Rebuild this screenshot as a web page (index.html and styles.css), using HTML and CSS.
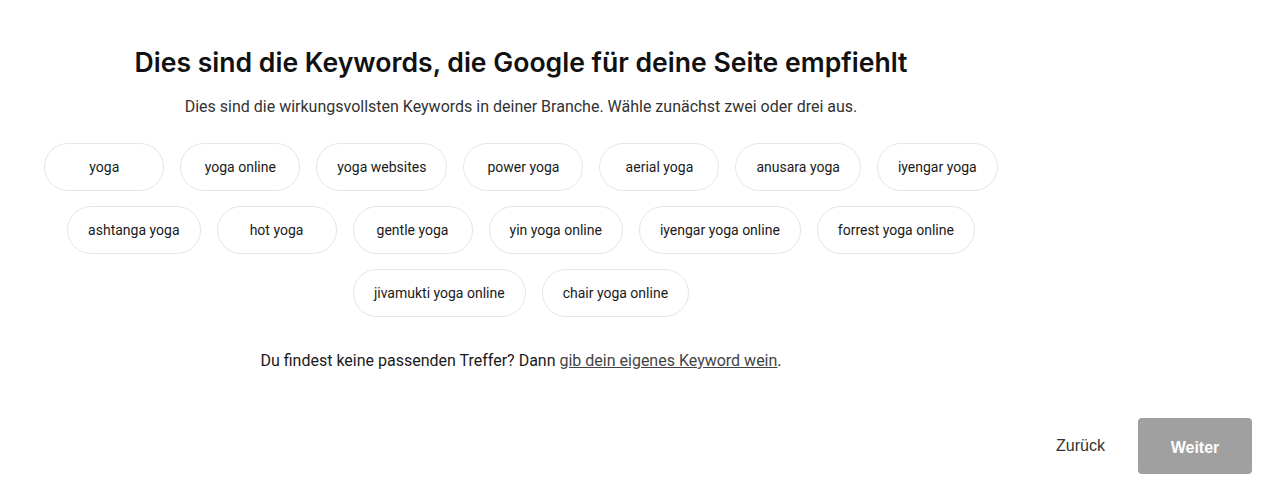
FILE: index.html
```html
<!DOCTYPE html>
<html lang="de">
<head>
<meta charset="utf-8">
<link rel="stylesheet" href="styles.css">
</head>
<body>
<div class="page">
  <main class="main">
    <h1 class="title">Dies sind die Keywords, die Google für deine Seite empfiehlt</h1>
    <p class="subtitle">Dies sind die wirkungsvollsten Keywords in deiner Branche. Wähle zunächst zwei oder drei aus.</p>
    <div class="chips">
      <div class="row">
        <button class="chip">yoga</button>
        <button class="chip">yoga online</button>
        <button class="chip">yoga websites</button>
        <button class="chip">power yoga</button>
        <button class="chip">aerial yoga</button>
        <button class="chip">anusara yoga</button>
        <button class="chip">iyengar yoga</button>
      </div>
      <div class="row">
        <button class="chip">ashtanga yoga</button>
        <button class="chip">hot yoga</button>
        <button class="chip">gentle yoga</button>
        <button class="chip">yin yoga online</button>
        <button class="chip">iyengar yoga online</button>
        <button class="chip">forrest yoga online</button>
      </div>
      <div class="row">
        <button class="chip">jivamukti yoga online</button>
        <button class="chip">chair yoga online</button>
      </div>
    </div>
    <p class="hint">Du findest keine passenden Treffer? Dann <a class="link" href="#">gib dein eigenes Keyword wein</a>.</p>
  </main>
  <footer class="actions">
    <button class="back">Zurück</button>
    <button class="next">Weiter</button>
  </footer>
</div>
</body>
</html>
```

FILE: styles.css
```css
html, body {
  margin: 0;
  padding: 0;
  background: #fff;
}
.page {
  width: 1281px;
  height: 492px;
  display: flex;
  flex-direction: column;
}
.main {
  width: 1042px;
  display: flex;
  flex-direction: column;
  align-items: center;
  text-align: center;
}
.title {
  margin: 45px 0 0;
  font-family: Inter, "Noto Sans", sans-serif;
  font-weight: 600;
  font-size: 26.6px;
  line-height: 34px;
  color: #111;
}
.subtitle {
  margin: 18px 0 0;
  font-family: Roboto, "Liberation Sans", sans-serif;
  font-size: 16px;
  line-height: 20px;
  color: #333;
}
.chips {
  margin-top: 26px;
  display: flex;
  flex-direction: column;
  gap: 15px;
  align-items: center;
}
.row {
  display: flex;
  gap: 16px;
  justify-content: center;
}
.chip {
  min-width: 120px;
  height: 48px;
  padding: 0 20px;
  border: 1px solid #e6e6e6;
  border-radius: 24px;
  background: #fff;
  font-family: Roboto, "Liberation Sans", sans-serif;
  font-size: 14px;
  color: #1a1a1a;
  cursor: pointer;
}
.hint {
  margin: 34px 0 0;
  font-family: Roboto, "Liberation Sans", sans-serif;
  font-size: 16px;
  line-height: 20px;
  color: #1a1a1a;
}
.link {
  color: #444;
  text-decoration: underline;
}
.actions {
  margin-top: auto;
  margin-bottom: 18px;
  padding-right: 29px;
  display: flex;
  justify-content: flex-end;
  align-items: center;
  gap: 33px;
}
.back {
  border: 0;
  background: none;
  padding: 0;
  font-family: "Liberation Sans", Arial, sans-serif;
  font-size: 16px;
  color: #333;
}
.next {
  width: 114px;
  height: 56px;
  padding: 4px 0 0;
  border: 0;
  border-radius: 4px;
  background: #a0a0a0;
  color: #fff;
  font-family: "Liberation Sans", Arial, sans-serif;
  font-weight: 700;
  font-size: 16px;
}
```
